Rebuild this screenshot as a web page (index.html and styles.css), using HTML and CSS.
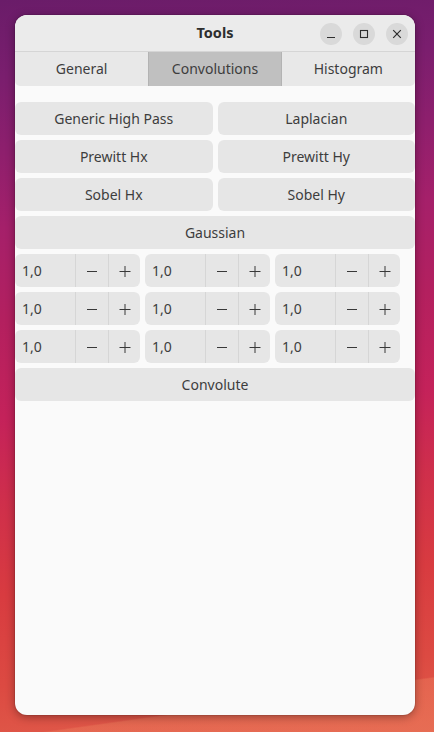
FILE: index.html
```html
<!DOCTYPE html>
<html>
<head>
<meta charset="utf-8">
<link rel="stylesheet" href="styles.css">
</head>
<body>
<div class="wallpaper">
  <div class="window">
    <div class="titlebar">
      <div></div>
      <div class="title">Tools</div>
      <div class="controls">
        <span class="ctl"><svg width="10" height="10" viewBox="0 0 10 10"><path d="M1 8.5h8" stroke="#2e2e2e" stroke-width="1.2"/></svg></span>
        <span class="ctl"><svg width="10" height="10" viewBox="0 0 10 10"><rect x="1.5" y="1.5" width="7" height="7" fill="none" stroke="#2e2e2e" stroke-width="1.1"/></svg></span>
        <span class="ctl"><svg width="10" height="10" viewBox="0 0 10 10"><path d="M1.2 1.2L8.8 8.8M8.8 1.2L1.2 8.8" stroke="#2e2e2e" stroke-width="1.2"/></svg></span>
      </div>
    </div>
    <div class="tabs">
      <div class="tab">General</div>
      <div class="tab active">Convolutions</div>
      <div class="tab">Histogram</div>
    </div>
    <div class="content">
      <div class="grid2">
        <div class="btn">Generic High Pass</div>
        <div class="btn">Laplacian</div>
        <div class="btn">Prewitt Hx</div>
        <div class="btn">Prewitt Hy</div>
        <div class="btn">Sobel Hx</div>
        <div class="btn">Sobel Hy</div>
      </div>
      <div class="btn">Gaussian</div>
      <div class="spins">
        <div class="spin"><span class="val">1,0</span><span class="sb"><svg width="12" height="12" viewBox="0 0 12 12"><path d="M1 6.5h10" stroke="#383838" stroke-width="1"/></svg></span><span class="sb"><svg width="12" height="12" viewBox="0 0 12 12"><path d="M0.5 6.5h11M6 1v11" stroke="#383838" stroke-width="1"/></svg></span></div>
        <div class="spin"><span class="val">1,0</span><span class="sb"><svg width="12" height="12" viewBox="0 0 12 12"><path d="M1 6.5h10" stroke="#383838" stroke-width="1"/></svg></span><span class="sb"><svg width="12" height="12" viewBox="0 0 12 12"><path d="M0.5 6.5h11M6 1v11" stroke="#383838" stroke-width="1"/></svg></span></div>
        <div class="spin"><span class="val">1,0</span><span class="sb"><svg width="12" height="12" viewBox="0 0 12 12"><path d="M1 6.5h10" stroke="#383838" stroke-width="1"/></svg></span><span class="sb"><svg width="12" height="12" viewBox="0 0 12 12"><path d="M0.5 6.5h11M6 1v11" stroke="#383838" stroke-width="1"/></svg></span></div>
        <div class="spin"><span class="val">1,0</span><span class="sb"><svg width="12" height="12" viewBox="0 0 12 12"><path d="M1 6.5h10" stroke="#383838" stroke-width="1"/></svg></span><span class="sb"><svg width="12" height="12" viewBox="0 0 12 12"><path d="M0.5 6.5h11M6 1v11" stroke="#383838" stroke-width="1"/></svg></span></div>
        <div class="spin"><span class="val">1,0</span><span class="sb"><svg width="12" height="12" viewBox="0 0 12 12"><path d="M1 6.5h10" stroke="#383838" stroke-width="1"/></svg></span><span class="sb"><svg width="12" height="12" viewBox="0 0 12 12"><path d="M0.5 6.5h11M6 1v11" stroke="#383838" stroke-width="1"/></svg></span></div>
        <div class="spin"><span class="val">1,0</span><span class="sb"><svg width="12" height="12" viewBox="0 0 12 12"><path d="M1 6.5h10" stroke="#383838" stroke-width="1"/></svg></span><span class="sb"><svg width="12" height="12" viewBox="0 0 12 12"><path d="M0.5 6.5h11M6 1v11" stroke="#383838" stroke-width="1"/></svg></span></div>
        <div class="spin"><span class="val">1,0</span><span class="sb"><svg width="12" height="12" viewBox="0 0 12 12"><path d="M1 6.5h10" stroke="#383838" stroke-width="1"/></svg></span><span class="sb"><svg width="12" height="12" viewBox="0 0 12 12"><path d="M0.5 6.5h11M6 1v11" stroke="#383838" stroke-width="1"/></svg></span></div>
        <div class="spin"><span class="val">1,0</span><span class="sb"><svg width="12" height="12" viewBox="0 0 12 12"><path d="M1 6.5h10" stroke="#383838" stroke-width="1"/></svg></span><span class="sb"><svg width="12" height="12" viewBox="0 0 12 12"><path d="M0.5 6.5h11M6 1v11" stroke="#383838" stroke-width="1"/></svg></span></div>
        <div class="spin"><span class="val">1,0</span><span class="sb"><svg width="12" height="12" viewBox="0 0 12 12"><path d="M1 6.5h10" stroke="#383838" stroke-width="1"/></svg></span><span class="sb"><svg width="12" height="12" viewBox="0 0 12 12"><path d="M0.5 6.5h11M6 1v11" stroke="#383838" stroke-width="1"/></svg></span></div>
      </div>
      <div class="btn">Convolute</div>
    </div>
  </div>
</div>
</body>
</html>
```
FILE: styles.css
```css
html, body {
  margin: 0;
  padding: 0;
}
body {
  width: 434px;
  height: 732px;
  overflow: hidden;
  font-family: "Noto Sans", "Open Sans", sans-serif;
  font-size: 14px;
  color: #3d3d3d;
}
.wallpaper {
  width: 434px;
  height: 732px;
  padding: 15px 0 0 15px;
  box-sizing: border-box;
  background:
    linear-gradient(172deg, rgba(255,255,255,0) 0%, rgba(255,255,255,0) 93%, rgba(235,120,90,0.5) 93.2%, rgba(235,120,90,0.6) 100%),
    linear-gradient(176deg, #6a1c69 0%, #7a1e6e 10%, #8e1f6d 20%, #a5206a 30%, #b3205f 42%, #c4225a 55%, #cf2f4b 66%, #d83b40 78%, #dc4a42 90%, #e05c4a 100%);
}
.window {
  width: 400px;
  height: 700px;
  background: #fafafa;
  border-radius: 12px;
  overflow: hidden;
  box-shadow: 0 2px 10px rgba(0,0,0,0.35), 0 0 0 1px rgba(0,0,0,0.08);
  display: flex;
  flex-direction: column;
}
.titlebar {
  height: 36px;
  flex: none;
  background: #ebebeb;
  border-bottom: 1px solid #d5d5d5;
  display: grid;
  grid-template-columns: 1fr auto 1fr;
  align-items: center;
}
.title {
  font-weight: bold;
  font-size: 14.5px;
  color: #2e2e2e;
  padding-bottom: 2px;
}
.controls {
  justify-self: end;
  display: flex;
  gap: 11px;
  padding-right: 7px;
  padding-top: 1px;
}
.ctl {
  width: 22px;
  height: 22px;
  border-radius: 50%;
  background: #d9d9d9;
  display: flex;
  align-items: center;
  justify-content: center;
}
.tabs {
  height: 34px;
  flex: none;
  display: grid;
  grid-template-columns: 1fr 1fr 1fr;
  background: #e8e8e8;
  border-radius: 0 0 5px 5px;
}
.tab {
  display: flex;
  align-items: center;
  justify-content: center;
  color: #3d3d3d;
  padding-bottom: 2px;
}
.tab.active {
  background: #c0c0c0;
  box-shadow: inset 1px 0 0 #b3b3b3, inset -1px 0 0 #b3b3b3;
}
.content {
  padding-top: 16px;
  display: flex;
  flex-direction: column;
  gap: 5px;
}
.grid2 {
  display: grid;
  grid-template-columns: 1fr 1fr;
  gap: 5px;
}
.btn {
  height: 33px;
  border-radius: 6px;
  background: #e6e6e6;
  display: flex;
  align-items: center;
  justify-content: center;
  color: #3d3d3d;
}
.spins {
  display: grid;
  grid-template-columns: repeat(3, 125px);
  gap: 5px;
}
.spin {
  height: 33px;
  border-radius: 6px;
  background: #e6e6e6;
  display: flex;
  align-items: center;
}
.val {
  width: 60px;
  padding-left: 7px;
  box-sizing: border-box;
  color: #3d3d3d;
}
.sb {
  height: 33px;
  width: 33px;
  border-left: 1px solid #d6d6d6;
  display: flex;
  align-items: center;
  justify-content: center;
  box-sizing: border-box;
}
.sb:last-child {
  width: 32px;
}
```
